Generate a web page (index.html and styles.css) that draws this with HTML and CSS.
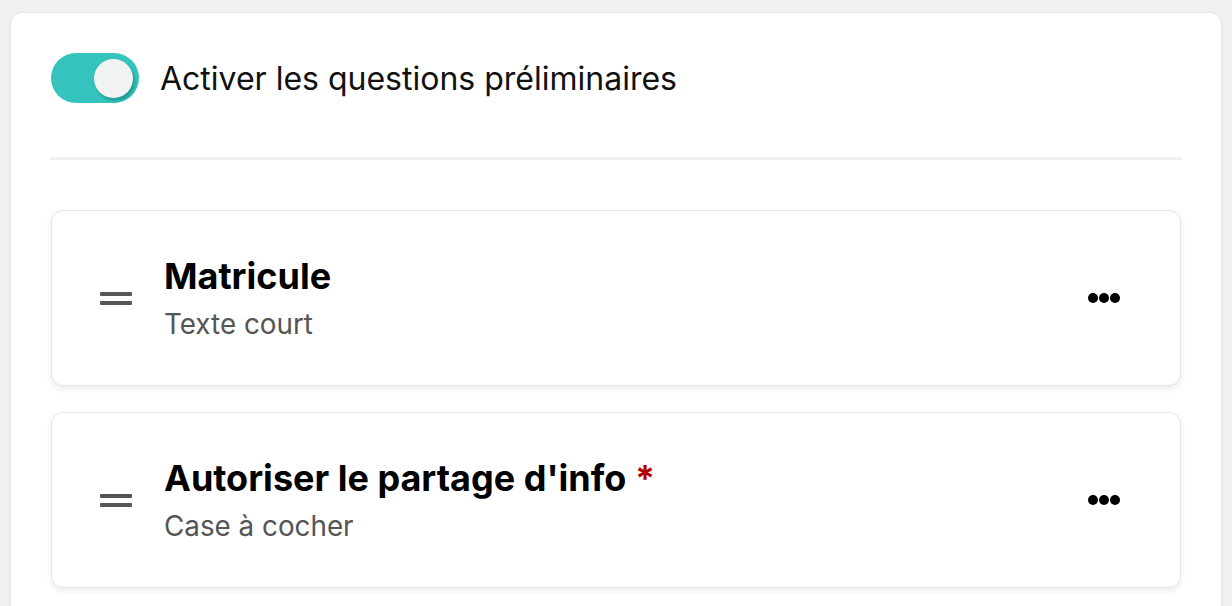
FILE: index.html
```html
<!DOCTYPE html>
<html lang="fr">
<head>
<meta charset="utf-8">
<link rel="stylesheet" href="styles.css">
</head>
<body>
<div class="panel">
  <div class="toggle-row">
    <span class="toggle"><span class="knob"></span></span>
    <span class="toggle-label">Activer les questions préliminaires</span>
  </div>
  <div class="divider"></div>
  <div class="list">
    <div class="item">
      <span class="handle"><span></span><span></span></span>
      <div class="item-text">
        <div class="item-title">Matricule</div>
        <div class="item-sub">Texte court</div>
      </div>
      <span class="dots"><i></i><i></i><i></i></span>
    </div>
    <div class="item">
      <span class="handle"><span></span><span></span></span>
      <div class="item-text">
        <div class="item-title">Autoriser le partage d'info <span class="req">*</span></div>
        <div class="item-sub">Case à cocher</div>
      </div>
      <span class="dots"><i></i><i></i><i></i></span>
    </div>
  </div>
</div>
</body>
</html>
```

FILE: styles.css
```css
* { box-sizing: border-box; }
html, body { margin: 0; padding: 0; }
body {
  background: #f0f2f1;
  font-family: Inter, "Noto Sans", sans-serif;
  color: #000;
  padding: 12px 10px 0 10px;
  height: 606px;
  overflow: hidden;
}
.panel {
  background: #fff;
  border: 1px solid #e6e8e7;
  border-radius: 12px;
  padding: 40px;
  height: 700px;
  box-shadow: 0 1px 4px rgba(0,0,0,0.05);
}
.toggle-row {
  display: flex;
  align-items: center;
  gap: 22px;
  height: 50px;
}
.toggle {
  width: 88px;
  height: 50px;
  border-radius: 25px;
  background: #35c4bd;
  display: flex;
  align-items: center;
  justify-content: flex-end;
  padding-right: 6px;
  flex: none;
}
.knob {
  width: 39px;
  height: 39px;
  border-radius: 50%;
  background: #f0f3f2;
  box-shadow: 2px 3px 3px rgba(0,80,75,0.35);
}
.toggle-label {
  font-size: 32px;
  color: #111;
  margin-left: -1px;
}
.divider {
  height: 3px;
  background: #f0f2f1;
  margin: 54px -1px 50px -1px;
}
.list {
  display: flex;
  flex-direction: column;
  gap: 26px;
}
.item {
  height: 176px;
  border: 1px solid #e6e6e6;
  border-radius: 12px;
  background: #fff;
  box-shadow: 0 3px 6px rgba(0,0,0,0.08);
  display: flex;
  align-items: center;
  padding: 0 60px 0 48px;
}
.handle {
  display: flex;
  flex-direction: column;
  gap: 5px;
  width: 32px;
  margin-right: 32px;
}
.handle span {
  display: block;
  height: 4px;
  background: #555;
  border-radius: 1px;
}
.item-text {
  flex: 1;
}
.item-title {
  font-size: 36px;
  font-weight: 700;
  line-height: 42px;
}
.req { color: #b30000; }
.item-sub {
  font-size: 27.8px;
  color: #555;
  line-height: 34px;
  margin-top: 10px;
}
.dots {
  display: flex;
  gap: 1px;
}
.dots i {
  display: block;
  width: 10px;
  height: 10px;
  border-radius: 50%;
  background: #000;
}
```
